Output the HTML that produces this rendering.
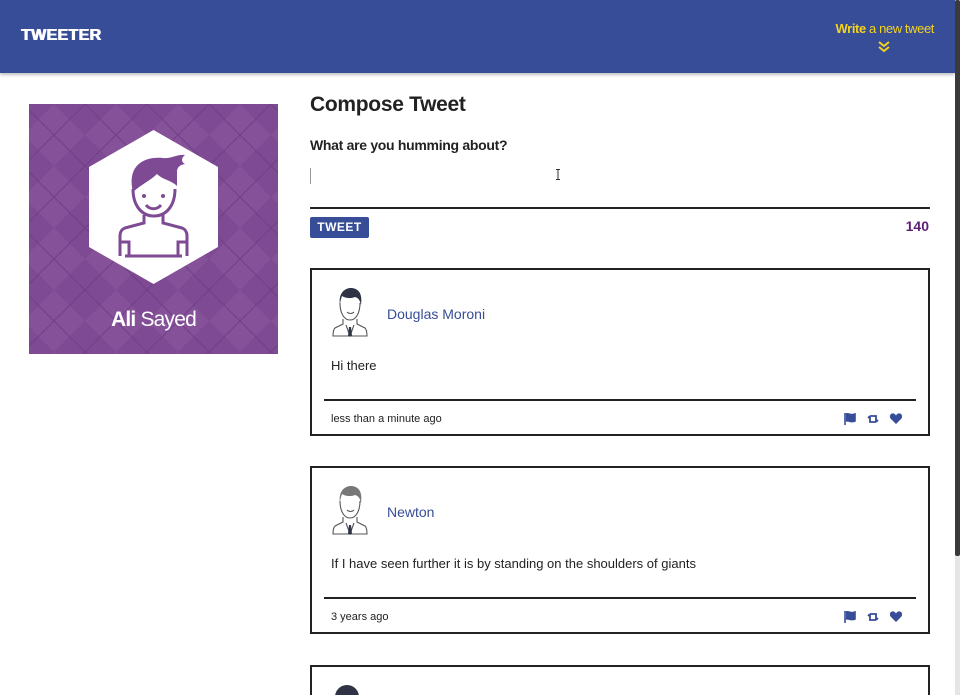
<!DOCTYPE html>
<html style="height:695px;overflow:hidden"><head><meta charset="utf-8"><style>
*{box-sizing:border-box;margin:0;padding:0}
body{width:960px;height:695px;overflow:hidden;background:#fff;font-family:"Liberation Sans",sans-serif;color:#222;position:relative}
header{position:absolute;left:0;top:0;width:955px;height:73px;background:#374d97;box-shadow:0 2px 3px rgba(0,0,0,.25)}
.logo{position:absolute;left:21px;top:27px;color:#fff;font:900 16px "Liberation Sans",sans-serif;letter-spacing:0.3px;text-shadow:0.6px 0 #fff,-0.3px 0 #fff}
.write{position:absolute;right:21px;top:21px;color:#f5d31c;font-size:13px;letter-spacing:-0.4px}
.write b{font-weight:bold}
.chev{position:absolute;left:877px;top:41px}
.scroll{position:absolute;right:0;top:0;width:5px;height:695px;background:#e6e6e6}
.thumb{position:absolute;right:0;top:0;width:5px;height:556px;background:#3a3a3a;border-radius:2px}
.profile{position:absolute;left:29px;top:104px;width:249px;height:250px;background:#7d4a93;overflow:hidden}
.name{position:absolute;left:0;width:100%;top:204px;text-align:center;color:#fff;font-size:21px;letter-spacing:-0.8px}
h1{position:absolute;left:310px;top:93px;font-size:21px;font-weight:bold;letter-spacing:-0.3px}
.q{position:absolute;left:310px;top:137px;font-size:14px;font-weight:bold;letter-spacing:-0.3px}
.caret{position:absolute;left:310px;top:168px;width:1px;height:16px;background:#999}
.rule{position:absolute;left:310px;top:207px;width:620px;height:2px;background:#222}
.btn{position:absolute;left:310px;top:217px;width:59px;height:21px;background:#374d97;border-radius:2px;color:#fff;font-weight:900;font-size:12px;text-align:center;line-height:21px;letter-spacing:0.5px}
.count{position:absolute;right:31px;top:218px;color:#5e1f78;font-weight:900;font-size:14px}
.tw{position:absolute;left:310px;width:620px;height:168px;border:2px solid #222}
.tw .av{position:absolute;left:20px;top:17px}
.tw .un{position:absolute;left:75px;top:36px;color:#374d97;font-size:14px}
.tw .tx{position:absolute;left:19px;top:88px;font-size:13px}
.tw .ln{position:absolute;left:12px;right:12px;top:129px;height:2px;background:#222}
.tw .tm{position:absolute;left:19px;top:143px;font-size:11px}
.tw .ic{position:absolute;right:22px;top:143px}
</style></head><body>
<header><div class="logo">TWEETER</div>
<div class="write"><b>Write</b> a new tweet</div>
<svg class="chev" width="14" height="12" viewBox="0 0 14 12"><path d="M2 1l5 4 5-4M2 6l5 4 5-4" stroke="#f5d31c" stroke-width="2" fill="none"/></svg>
</header>
<div class="scroll"><div class="thumb"></div></div>
<div class="profile">
<svg width="249" height="250" style="position:absolute;left:0;top:0">
<defs><pattern id="p" width="62" height="62" patternUnits="userSpaceOnUse" x="-6" y="0"><path d="M31 0L62 31 31 62 0 31z" fill="#85529a"/><path d="M0 0L31 31 0 62M62 0L31 31 62 62" stroke="#6f3f85" stroke-width="1" fill="none"/></pattern></defs>
<rect width="249" height="250" fill="url(#p)"/>
<polygon points="124.5,26 189,63 189,143 124.5,180 60,143 60,63" fill="#fff"/>
<path d="M104 88c-6-24 8-36 30-34 8 1 14-4 22-3-4 3-4 7 0 9-5 1-8 3-8 8v14c-6-6-14-6-20-12-6 6-15 10-24 18z" fill="#7d4a93"/>
<g fill="none" stroke="#7d4a93" stroke-width="3">
<path d="M104 85c0 17 9 27 21 27s21-10 21-27"/>
<path d="M117 101c4 5 11 5 15 0"/>
<path d="M115 111v8l-19 5c-3 1-5 4-5 8v20M134 111v8l19 5c3 1 5 4 5 8v20M96 152h57"/>
<path d="M91 138h9v14M158 138h-9v14"/>
</g>
<circle cx="115" cy="92" r="2" fill="#7d4a93"/><circle cx="134" cy="92" r="2" fill="#7d4a93"/>
</svg>
<div class="name"><b>Ali</b> Sayed</div>
</div>
<h1>Compose Tweet</h1>
<div class="q">What are you humming about?</div>
<div class="caret"></div>
<svg style="position:absolute;left:555px;top:169px" width="6" height="11"><path d="M1 .5h4M3 .5v10M1 10.5h4" stroke="#333" fill="none"/></svg>
<div class="rule"></div>
<div class="btn">TWEET</div>
<div class="count">140</div>

<div class="tw" style="top:268px">
<svg class="av" width="36" height="50" viewBox="0 0 36 50"><path d="M8 18c-2-12 5-17 11-17s12 4 10 17c-1-4-2-7-6-8-5 2-10 1-13-1-1 3-2 6-2 9z" fill="#2e3445"/><path d="M8 16c0 10 4 17 10 17s10-7 10-17M11 32v5L3 41c-1 1-2 3-2 8h34c0-5-1-7-2-8l-8-4v-5M14 38l4 11 4-11" stroke="#555" fill="none" stroke-width="1.1"/><path d="M17 40h2l1 9h-4z" fill="#2e3445"/><path d="M15 25c2 2 5 2 7 0" stroke="#555" fill="none"/></svg>
<div class="un">Douglas Moroni</div>
<div class="tx">Hi there</div>
<div class="ln"></div>
<div class="tm">less than a minute ago</div>
<svg class="ic" width="62" height="12"><path d="M1 0v12M2 1c3-1 5 2 9 0v7c-4 2-6-1-9 0" fill="#374d97" stroke="#374d97" stroke-width="1.6"/><path d="M26 3h6v6M26 3l-2 2M32 9h-6V4M32 9l2-2" stroke="#374d97" stroke-width="1.8" fill="none"/><path d="M52 11L47 6c-2-2-1-5 1-5.5 2-.5 3 .5 4 2 1-1.5 2-2.5 4-2 2 .5 3 3.5 1 5.5z" fill="#374d97"/></svg>
</div>

<div class="tw" style="top:466px">
<svg class="av" width="36" height="50" viewBox="0 0 36 50"><path d="M8 18c-2-12 5-17 11-17s12 4 10 17c-1-4-2-7-6-8-5 2-10 1-13-1-1 3-2 6-2 9z" fill="#777"/><path d="M8 16c0 10 4 17 10 17s10-7 10-17M11 32v5L3 41c-1 1-2 3-2 8h34c0-5-1-7-2-8l-8-4v-5M14 38l4 11 4-11" stroke="#555" fill="none" stroke-width="1.1"/><path d="M17 40h2l1 9h-4z" fill="#2e3445"/><path d="M15 25c2 2 5 2 7 0" stroke="#555" fill="none"/></svg>
<div class="un">Newton</div>
<div class="tx">If I have seen further it is by standing on the shoulders of giants</div>
<div class="ln"></div>
<div class="tm">3 years ago</div>
<svg class="ic" width="62" height="12"><path d="M1 0v12M2 1c3-1 5 2 9 0v7c-4 2-6-1-9 0" fill="#374d97" stroke="#374d97" stroke-width="1.6"/><path d="M26 3h6v6M26 3l-2 2M32 9h-6V4M32 9l2-2" stroke="#374d97" stroke-width="1.8" fill="none"/><path d="M52 11L47 6c-2-2-1-5 1-5.5 2-.5 3 .5 4 2 1-1.5 2-2.5 4-2 2 .5 3 3.5 1 5.5z" fill="#374d97"/></svg>
</div>

<div class="tw" style="top:665px;height:30px;border-bottom:none">
<div style="position:absolute;left:23px;top:18px;width:24px;height:24px;border-radius:50%;background:#2e3445"></div>
</div>
</body></html>
